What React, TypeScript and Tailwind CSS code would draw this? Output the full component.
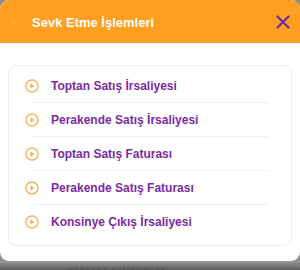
import React from 'react';

const items = [
  'Toptan Satış İrsaliyesi',
  'Perakende Satış İrsaliyesi',
  'Toptan Satış Faturası',
  'Perakende Satış Faturası',
  'Konsinye Çıkış İrsaliyesi',
];

function PlayCircle() {
  return (
    <svg width="14" height="14" viewBox="0 0 14 14" className="shrink-0">
      <circle cx="7" cy="7" r="6.1" fill="none" stroke="#fbab45" strokeWidth="1.3" />
      <path d="M5.6 4.6 L9.1 7 L5.6 9.4 Z" fill="#f5a23a" />
    </svg>
  );
}

export default function App() {
  return (
    <div className="w-[300px] h-[270px] bg-[#8e8e8e] overflow-hidden font-['Liberation_Sans',Arial,sans-serif]">
      <div className="w-[300px] h-[261px] bg-white rounded-[9px] overflow-hidden flex flex-col">
        <header className="h-[43px] bg-[#fe9f1f] flex items-center pl-[11px] pr-[11px] shrink-0">
          <svg width="7" height="10" viewBox="0 0 7 10" className="mr-[14px] opacity-20">
            <path d="M0 0 L7 5 L0 10 Z" fill="#ffc270" />
          </svg>
          <h2 className="text-white font-bold text-[13px] leading-none mt-[1px]">Sevk Etme İşlemleri</h2>
          <button className="ml-auto w-[14px] h-[14px] flex items-center justify-center mr-[-1px]">
            <svg width="14" height="14" viewBox="0 0 14 14">
              <path d="M1.5 1.5 L12.5 12.5 M12.5 1.5 L1.5 12.5" stroke="#6b2fa4" strokeWidth="2.3" strokeLinecap="round" />
            </svg>
          </button>
        </header>

        <div className="px-2 pt-[22px]">
          <div className="border border-[#ececec] rounded-[8px] pt-[3px] pb-[7px]">
            {items.map((label, i) => (
              <div key={label}>
                {i > 0 && <div className="h-px bg-[#f1f1ef] ml-[24px] mr-[23px]" />}
                <div className="h-[33px] flex items-center pl-[16px] gap-[12px]">
                  <PlayCircle />
                  <span className="text-[12px] font-bold text-[#7b2aa3] leading-none">{label}</span>
                </div>
              </div>
            ))}
          </div>
        </div>
      </div>
      <div className="h-[9px] flex items-end pl-[68px] bg-gradient-to-b from-[#9a9a9a] to-[#5c5c5c]">
        <span className="text-[7px] leading-none text-[#3f3f3f] tracking-[1px] opacity-60 translate-y-[3px]">HAREKET ETTİRİLECEK</span>
      </div>
    </div>
  );
}
